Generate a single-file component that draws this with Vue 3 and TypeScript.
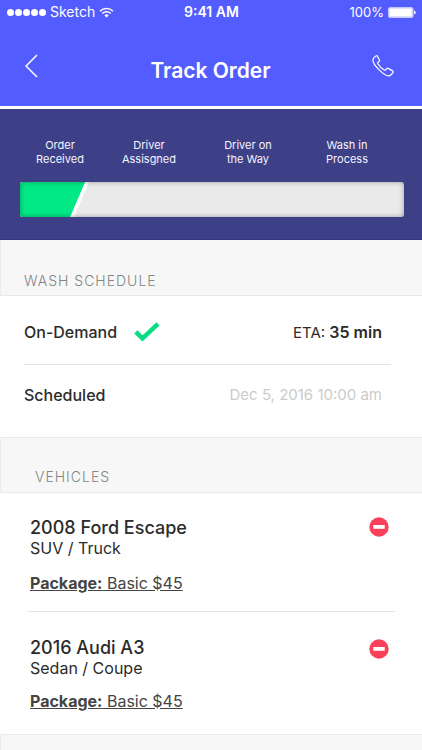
<script setup lang="ts">
interface Vehicle {
  name: string
  type: string
  packageName: string
  price: number
}

const steps: string[][] = [
  ['Order', 'Received'],
  ['Driver', 'Assisgned'],
  ['Driver on', 'the Way'],
  ['Wash in', 'Process'],
]

const progress = 18

const vehicles: Vehicle[] = [
  { name: '2008 Ford Escape', type: 'SUV / Truck', packageName: 'Basic', price: 45 },
  { name: '2016 Audi A3', type: 'Sedan / Coupe', packageName: 'Basic', price: 45 },
]
</script>

<template>
  <div class="screen">
    <header class="top">
      <div class="status">
        <div class="carrier">
          <span class="signal"><i v-for="n in 5" :key="n" class="dot"></i></span>
          <span>Sketch</span>
          <svg class="wifi" viewBox="0 0 15 11" aria-hidden="true">
            <path d="M1 4.2a9.2 9.2 0 0 1 13 0M3.3 6.5a6 6 0 0 1 8.4 0" fill="none" stroke="currentColor" stroke-width="1.6" />
            <path d="M7.5 10.6 5.3 8.4a3.1 3.1 0 0 1 4.4 0z" fill="currentColor" />
          </svg>
        </div>
        <span class="clock">9:41 AM</span>
        <div class="power">
          <span>100%</span>
          <svg class="battery" viewBox="0 0 28 11" aria-hidden="true">
            <rect x="0.5" y="0.5" width="24.5" height="10" rx="1.5" fill="#dfe0ff" stroke="#c5c7ff" />
            <rect x="2" y="2" width="21.5" height="7" rx="0.5" fill="#fff" />
            <path d="M26 3.5c1.2.2 1.8 1 1.8 2s-.6 1.8-1.8 2z" fill="#e6e7ff" />
          </svg>
        </div>
      </div>
      <div class="nav">
        <button class="icon-button" type="button" aria-label="Back">
          <svg class="back" viewBox="0 0 14 24" fill="none" stroke="currentColor" stroke-width="1.5" aria-hidden="true">
            <path d="M12 1 1 12l11 11" />
          </svg>
        </button>
        <h1 class="title">Track Order</h1>
        <button class="icon-button call" type="button" aria-label="Call">
          <svg class="phone" viewBox="0 0 22 22" fill="none" stroke="currentColor" stroke-width="1.2" stroke-linejoin="round" aria-hidden="true">
            <path d="M4 .9c.5-.3 1.1-.2 1.4.3l2 3.6c.3.5.2 1-.2 1.4L6 7.3c-.4.4-.4.9-.1 1.4 1.5 2.6 3.700 4.800 6.400 6.300.5.300 1 .200 1.400-.200l1-1.200c.400-.400.900-.500 1.400-.200l4.600 2.500c.500.300.600.900.300 1.400-.800 1.700-2.200 3.400-3.900 3.500-2 .100-6.800-2.800-10.200-6.200C3.600 11.500.700 7 .900 4.700 1 3.100 2.600 1.700 4 .900z" />
          </svg>
        </button>
      </div>
    </header>

    <section class="tracker" aria-label="Order progress">
      <ol class="steps">
        <li v-for="step in steps" :key="step.join(' ')">{{ step[0] }}<br />{{ step[1] }}</li>
      </ol>
      <div class="bar" role="progressbar" aria-label="Order progress" :aria-valuenow="progress" aria-valuemin="0" aria-valuemax="100">
        <div class="edge" :style="{ width: progress + '%' }">
          <div class="fill"></div>
        </div>
      </div>
    </section>

    <h2 class="heading">WASH SCHEDULE</h2>
    <section class="schedule">
      <div class="row">
        <span class="option">On-Demand</span>
        <svg class="check" viewBox="0 0 26 20" fill="none" stroke="#08dc86" stroke-width="4.5" aria-hidden="true">
          <path d="M1.8 9.8 8.5 16.4 24 1.9" />
        </svg>
        <span class="value">ETA: <strong>35 min</strong></span>
      </div>
      <div class="row">
        <span class="option">Scheduled</span>
        <span class="value muted">Dec 5, 2016 10:00 am</span>
      </div>
    </section>

    <h2 class="heading indented">VEHICLES</h2>
    <section class="vehicles">
      <article v-for="vehicle in vehicles" :key="vehicle.name" class="vehicle">
        <div>
          <h3 class="name">{{ vehicle.name }}</h3>
          <p class="type">{{ vehicle.type }}</p>
          <a class="package" href="#"><strong>Package:</strong> {{ vehicle.packageName }} ${{ vehicle.price }}</a>
        </div>
        <button class="remove" type="button" :aria-label="'Remove ' + vehicle.name">
          <svg viewBox="0 0 20 20" aria-hidden="true">
            <circle cx="10" cy="10" r="9.7" fill="#fb4059" />
            <rect x="4.3" y="8" width="11.4" height="3.8" fill="#fff" />
          </svg>
        </button>
      </article>
    </section>
    <footer class="foot"></footer>
  </div>
</template>

<style>
body {
  background: #f7f7f7;
}
</style>

<style scoped>
.screen {
  display: flex;
  flex-direction: column;
  min-height: 100vh;
  overflow: hidden;
  box-sizing: border-box;
  background: #fff;
  color: #2b2b2b;
  font-family: Inter, "Liberation Sans", sans-serif;
  font-size: 16px;
  line-height: 20px;
}

h1,
h2,
h3,
p,
ol {
  margin: 0;
  padding: 0;
}

button {
  padding: 0;
  border: 0;
  background: none;
  color: inherit;
  cursor: pointer;
}

svg {
  display: block;
}

.top {
  background: #535cff;
  border-bottom: 3px solid #fff;
  color: #fff;
}

.status {
  display: grid;
  grid-template-columns: 1fr auto 1fr;
  align-items: center;
  height: 24px;
  padding: 0 6px 0 7px;
  font-size: 14px;
}

.carrier,
.power,
.signal {
  display: flex;
  align-items: center;
}

.carrier {
  gap: 4px;
}

.power {
  gap: 4px;
  justify-content: flex-end;
  font-size: 13px;
}

.signal {
  gap: 1px;
}

.dot {
  width: 7px;
  height: 7px;
  border-radius: 50%;
  background: #fff;
}

.wifi {
  width: 15px;
  height: 11px;
}

.battery {
  width: 28px;
  height: 11px;
}

.clock {
  font-weight: 600;
}

.nav {
  display: grid;
  grid-template-columns: 24px 1fr 24px;
  align-items: center;
  height: 82px;
  padding: 2px 26px 0 25px;
  box-sizing: border-box;
}

.icon-button {
  display: flex;
  align-items: center;
  height: 48px;
}

.back {
  width: 14px;
  height: 24px;
}

.phone {
  width: 22px;
  height: 22px;
}

.title {
  padding-top: 10px;
  font-size: 21px;
  line-height: 24px;
  font-weight: 600;
  text-align: center;
}

.tracker {
  padding: 29px 18px 22px 20px;
  background: #3e4087;
  border-bottom: 1px solid #34377c;
}

.steps {
  display: grid;
  grid-template-columns: 80fr 98fr 100fr 98fr;
  padding-right: 8px;
  list-style: none;
  color: #f4f4ff;
  font-size: 11px;
  line-height: 14px;
  text-align: center;
}

.bar {
  position: relative;
  height: 35px;
  margin-top: 16px;
  border-radius: 3px;
  background: #eaeaea;
  overflow: hidden;
}

.bar::after {
  content: "";
  position: absolute;
  inset: 0;
  border-radius: 3px;
  box-shadow: inset 0 0 5px rgba(0, 0, 0, 0.35);
}

.edge {
  height: 100%;
  background: #fff;
  clip-path: polygon(0 0, 100% 0, calc(100% - 15px) 100%, 0 100%);
}

.fill {
  height: 100%;
  margin-right: 4px;
  background: linear-gradient(115deg, #00e985 80%, #04ac68);
  clip-path: polygon(0 0, 100% 0, calc(100% - 15px) 100%, 0 100%);
}

.heading {
  padding: 31px 23px 4px;
  background: #f7f7f7;
  border-bottom: 1px solid #e9e9e9;
  border-left: 1px solid #ececec;
  color: #858585;
  font-size: 14px;
  font-weight: 300;
  letter-spacing: 1px;
}

.indented {
  padding: 29px 34px 5px;
  border-top: 1px solid #e9e9e9;
}

.schedule {
  padding: 0 31px 0 24px;
}

.row {
  display: flex;
  align-items: center;
  height: 69px;
  padding: 4px 9px 0 0;
  border-bottom: 1px solid #e4e4e4;
  box-sizing: border-box;
}

.row + .row {
  height: 72px;
  padding: 0 9px 12px 0;
  border: 0;
}

.option {
  font-weight: 500;
}

.check {
  width: 26px;
  height: 20px;
  margin-left: 17px;
}

.value {
  margin-left: auto;
  font-size: 15px;
}

.value strong {
  font-size: 16px;
  font-weight: 600;
}

.muted {
  color: #cbcbcb;
}

.vehicles {
  padding: 0 27px 0 28px;
}

.vehicle {
  display: flex;
  justify-content: space-between;
  align-items: flex-start;
  padding: 24px 6px 18px 2px;
}

.vehicle + .vehicle {
  padding: 25px 6px 23px 2px;
  border-top: 1px solid #e4e4e4;
}

.name {
  font-size: 18px;
  line-height: 21px;
  font-weight: 500;
}

.type {
  margin-bottom: 15px;
}

.vehicle + .vehicle .type {
  margin-bottom: 13px;
}

.package {
  color: #444;
  text-decoration: underline;
}

.package strong {
  font-weight: 700;
}

.remove {
  width: 20px;
  height: 20px;
}

.vehicle + .vehicle .remove {
  margin-top: 2px;
}

.foot {
  flex: 1;
  min-height: 14px;
  background: #f7f7f7;
  border-top: 1px solid #ececec;
  border-left: 1px solid #ececec;
}
</style>
